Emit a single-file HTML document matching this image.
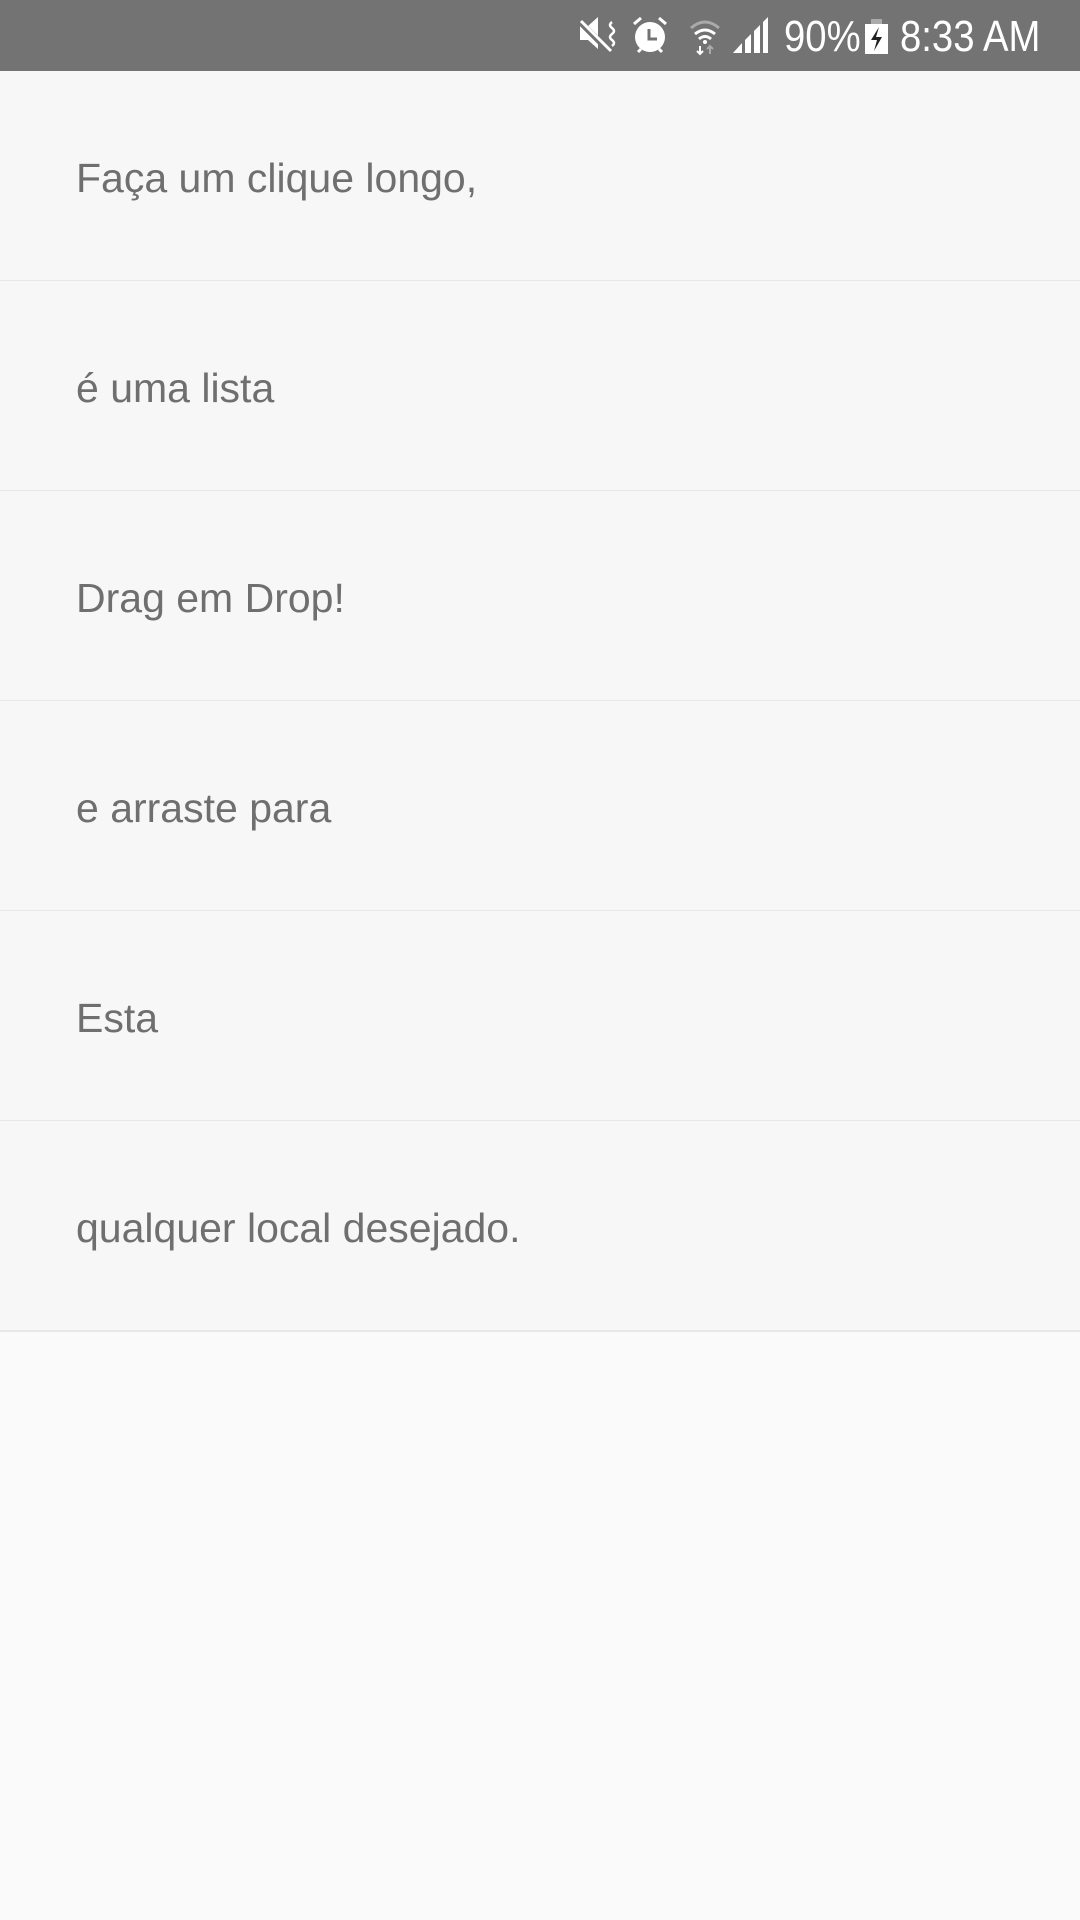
<!DOCTYPE html>
<html><head><meta charset="utf-8"><style>
html,body{margin:0;padding:0;width:1080px;height:1920px;background:#fafafa;overflow:hidden;font-family:"Liberation Sans",sans-serif}
.sb{position:absolute;left:0;top:0;width:1080px;height:71px;background:#737373}
.sbt{position:absolute;top:11px;color:#fff;font-size:44px;line-height:52px;transform-origin:left top;transform:scaleX(0.87);white-space:nowrap}
.row{position:absolute;left:0;width:1080px;height:209px;background:#f7f7f7;border-bottom:2px solid #e8e8e8}
.row span{position:absolute;left:76px;top:82px;font-size:41px;line-height:50px;color:#6f6f6f}
</style></head><body>
<div class="sb">
<svg width="1080" height="71" style="position:absolute;left:0;top:0">
<g fill="#fff">
<path d="M580 26h8l10-9v32l-10-9h-8z"/>
<path d="M580 22l30 30" stroke="#737373" stroke-width="6"/>
<path d="M581 21l30 30" stroke="#fff" stroke-width="3"/>
<path d="M612 22q-4 3 0 6q4 3 0 6q-4 3 0 6q4 3 0 6" stroke="#fff" stroke-width="2.5" fill="none"/>
<circle cx="650" cy="37" r="15"/>
<path d="M649 29v10h8" stroke="#737373" stroke-width="3" fill="none"/>
<path d="M634 24l7-6M666 24l-7-6M638 52l3-3M662 52l-3-3" stroke="#fff" stroke-width="3"/>
<path d="M691 28q14-12 28 0" stroke="#aaa" stroke-width="3" fill="none"/>
<path d="M695 34q10-8 20 0M699 39q6-5 12 0" stroke="#fff" stroke-width="3" fill="none"/>
<circle cx="705" cy="42" r="2"/>
<path d="M700 46v8M697 51l3 3 3-3" stroke="#fff" stroke-width="2" fill="none"/>
<path d="M710 54v-8M707 49l3-3 3 3" stroke="#aaa" stroke-width="2" fill="none"/>
<path d="M733 53l9-10v10z M745 40l6-6v19h-6z M754 31l6-6v28h-6z M763 22l5-5v36h-5z"/>
<rect x="865" y="24" width="23" height="30"/>
<rect x="871" y="19" width="11" height="5" fill="#aaa"/>
<path d="M879 27l-8 13h6l-3 11 8-14h-6z" fill="#222"/>
</g></svg>
<div class="sbt" style="left:784px">90%</div>
<div class="sbt" style="left:900px">8:33 AM</div>
</div>
<div class="row" style="top:71px"><span>Faça um clique longo,</span></div>
<div class="row" style="top:281px"><span>é uma lista</span></div>
<div class="row" style="top:491px"><span>Drag em Drop!</span></div>
<div class="row" style="top:701px"><span>e arraste para</span></div>
<div class="row" style="top:911px"><span>Esta</span></div>
<div class="row" style="top:1121px"><span>qualquer local desejado.</span></div>
</body></html>
